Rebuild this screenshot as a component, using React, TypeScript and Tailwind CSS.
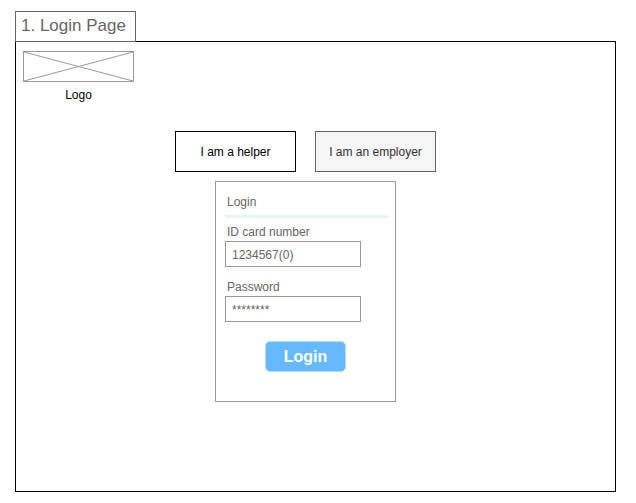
import React, { useState } from "react";

type FieldProps = {
  id: string;
  label: string;
  value: string;
  onChange: (value: string) => void;
};

function Field({ id, label, value, onChange }: FieldProps) {
  return (
    <div className="flex flex-col">
      <label htmlFor={id} className="ml-0.5 py-px leading-4">
        {label}
      </label>
      <input
        id={id}
        type="text"
        value={value}
        onChange={(e) => onChange(e.target.value)}
        className="h-[26px] w-[136px] border border-[#999999] bg-white px-1.5 pt-0.5 text-xs text-[#666666] outline-none"
      />
    </div>
  );
}

function LogoPlaceholder() {
  return (
    <figure className="flex w-[111px] flex-col items-center">
      <svg className="h-[31px] w-full border border-[#999999]" viewBox="0 0 109 29" preserveAspectRatio="none" aria-hidden="true">
        <path d="M0 0L109 29M0 29L109 0" stroke="#999999" fill="none" />
      </svg>
      <figcaption className="mt-[5px] text-xs text-black">Logo</figcaption>
    </figure>
  );
}

export default function App() {
  const [cardId, setCardId] = useState("1234567(0)");
  const [password, setPassword] = useState("********");

  return (
    <div className="bg-white py-[11px] pr-5 pl-[15px] font-['Liberation_Sans',Arial,sans-serif] text-xs text-[#666666]">
      <h1 className="relative z-10 -mb-px h-[31px] w-[121px] border border-[#666666] bg-white pl-[5px] text-[17px] leading-7 whitespace-nowrap">
        1. Login Page
      </h1>
      <main className="min-h-[451px] border border-black px-[7px] pt-[9px]">
        <LogoPlaceholder />
        <div className="mt-7 mr-5 flex flex-col items-center">
          <div className="flex gap-[19px]">
            <button type="button" className="h-[41px] w-[121px] border border-black bg-white text-black">
              I am a helper
            </button>
            <button type="button" className="h-[41px] w-[121px] border border-[#666666] bg-[#f5f5f5] text-[#333333]">
              I am an employer
            </button>
          </div>
          <form
            onSubmit={(e) => e.preventDefault()}
            className="mt-[9px] flex min-h-[221px] w-[181px] flex-col border border-[#999999] pr-[7px] pl-[9px]"
          >
            <h2 className="mb-[5px] border-b-[3px] border-[#e6f3ff] pt-3 pb-[5px] pl-0.5 leading-4">Login</h2>
            <div className="flex flex-col gap-[11px]">
              <Field id="card-id" label="ID card number" value={cardId} onChange={setCardId} />
              <Field id="password" label="Password" value={password} onChange={setPassword} />
            </div>
            <button
              type="submit"
              className="mt-[19px] mr-0.5 h-[31px] w-[81px] self-center rounded-[5px] border border-[#b3dbff] bg-[#66b8ff] text-base leading-7 font-bold text-white"
            >
              Login
            </button>
          </form>
        </div>
      </main>
    </div>
  );
}
